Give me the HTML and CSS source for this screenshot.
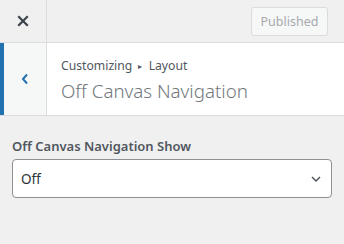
FILE: index.html
```html
<!DOCTYPE html>
<html lang="en">
<head>
    <meta charset="UTF-8">
    <title>Customize: Off Canvas Navigation</title>
    <link rel="stylesheet" href="styles.css">
</head>
<body>
    <div class="panel-header">
        <button class="close-btn" aria-label="Close">
            <svg width="12" height="12" viewBox="0 0 12 12"><path d="M2 2 L10 10 M10 2 L2 10" stroke="#3c434a" stroke-width="2.2" stroke-linecap="square"/></svg>
        </button>
        <button class="publish-btn" disabled>Published</button>
    </div>
    <div class="section-head">
        <button class="back-btn" aria-label="Back">
            <svg width="8" height="12" viewBox="0 0 8 12"><path d="M6 1.5 L2 6 L6 10.5" fill="none" stroke="#2271b1" stroke-width="2"/></svg>
        </button>
        <div class="section-title">
            <div class="crumbs">Customizing <span class="arrow">▸</span> Layout</div>
            <h2>Off Canvas Navigation</h2>
        </div>
    </div>
    <div class="controls">
        <label class="control-label" for="nav-show">Off Canvas Navigation Show</label>
        <div class="select-wrap">
            <select id="nav-show">
                <option>Off</option>
                <option>On</option>
            </select>
            <svg class="chev" width="12" height="8" viewBox="0 0 12 8"><path d="M2 2 L6 6 L10 2" fill="none" stroke="#50575e" stroke-width="1.5"/></svg>
        </div>
    </div>
</body>
</html>
```
FILE: styles.css
```css
body {
    margin: 0;
    background: #f0f0f1;
    font-family: "Noto Sans", "Open Sans", sans-serif;
    color: #3c434a;
}
button {
    font-family: inherit;
}
.panel-header {
    display: flex;
    align-items: center;
    height: 42px;
    border-bottom: 1px solid #dcdcde;
}
.close-btn {
    width: 47px;
    height: 42px;
    border: none;
    border-right: 1px solid #dcdcde;
    background: transparent;
    padding: 0;
    display: flex;
    align-items: center;
    justify-content: center;
}
.publish-btn {
    margin-left: auto;
    margin-right: 16px;
    width: 77px;
    height: 29px;
    border: 1px solid #dcdcde;
    border-radius: 3px;
    background: #f6f7f7;
    color: #a7aaad;
    font-size: 12.5px;
    padding: 0;
}
.section-head {
    display: flex;
    height: 72px;
    background: #fff;
    border-bottom: 1px solid #dcdcde;
}
.back-btn {
    width: 47px;
    border: none;
    border-left: 4px solid #2271b1;
    border-right: 1px solid #dcdcde;
    background: #f6f7f7;
    padding: 0;
    display: flex;
    align-items: center;
    justify-content: center;
}
.section-title {
    padding: 14px 0 0 14px;
}
.crumbs {
    font-size: 12.2px;
    color: #50575e;
    line-height: 18px;
}
.crumbs .arrow {
    font-size: 8px;
    vertical-align: 1px;
    margin: 0 3px;
}
.section-title h2 {
    margin: 3px 0 0;
    font-size: 18.7px;
    font-weight: 300;
    line-height: 26px;
    color: #72777c;
}
.controls {
    padding: 20px 12px;
}
.control-label {
    display: block;
    font-size: 13px;
    font-weight: 600;
    line-height: 20px;
    margin-bottom: 3px;
    color: #50575e;
}
.select-wrap {
    position: relative;
}
.select-wrap select {
    width: 100%;
    height: 39px;
    appearance: none;
    border: 1px solid #8c8f94;
    border-radius: 4px;
    background: #fff;
    color: #2c3338;
    font-family: inherit;
    font-size: 13.5px;
    padding: 0 30px 0 8px;
}
.chev {
    position: absolute;
    right: 10px;
    top: 16px;
    pointer-events: none;
}
```
